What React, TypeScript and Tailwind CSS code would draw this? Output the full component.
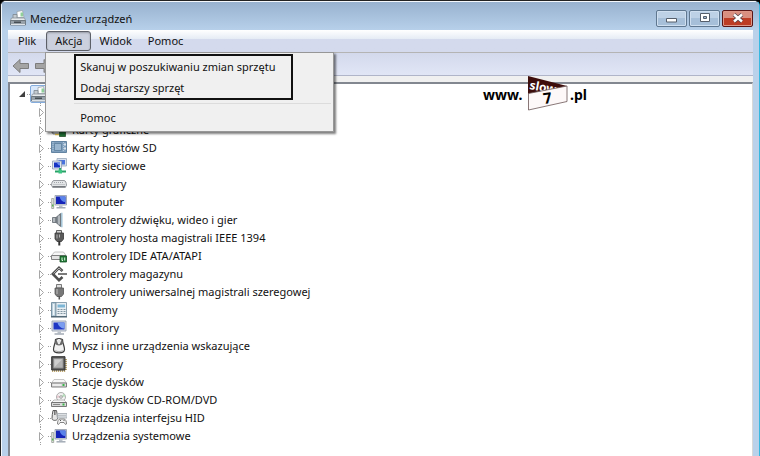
import type { ReactNode } from 'react';

function Icon({ children }: { children: ReactNode }) {
  return (
    <svg width="16" height="16" viewBox="0 0 16 16" className="block shrink-0" aria-hidden="true">
      {children}
    </svg>
  );
}

function PrinterIcon() {
  return (
    <Icon>
      <path d="M7 1.500 12.500.5l1.500 7H7z" fill="#fff" stroke="#9aa2a9" strokeWidth=".8" />
      <path d="M10.500 2.500h2.500v4h-2.500z" fill="#8fcf9a" />
      <path d="M3 4.500h4v4.500H3z" fill="#c3cad0" stroke="#7c868e" strokeWidth=".8" />
      <path d="M1.500 8h13l1 2.500H.5z" fill="#e6eaed" stroke="#8a939a" strokeWidth=".8" />
      <path d="M.5 10.500h15v4.500H.5z" fill="#98a2aa" stroke="#636d74" strokeWidth=".8" />
      <path d="M1 14.500h14" stroke="#dfe4e8" strokeWidth="1" />
      <path d="M4 11.500h7v1.500H4z" fill="#474f55" />
    </Icon>
  );
}

function AdapterIcon() {
  return (
    <Icon>
      <path d="M1 4h12v7H1z" fill="#b9bfc4" stroke="#777" strokeWidth=".8" />
      <path d="M2 8h7v4H2z" fill="#d8dcdf" stroke="#888" strokeWidth=".8" />
      <path d="M8.500 8.500h6v6h-6z" fill="#1e6c33" stroke="#27522b" strokeWidth=".8" />
      <path d="M4 12.500h4" stroke="#e0c050" strokeWidth="1.500" />
    </Icon>
  );
}

function SdIcon() {
  return (
    <Icon>
      <path d="M.5 1.500h15v11H.5z" fill="#7f9fbd" stroke="#6384a2" strokeWidth="1" />
      <path d="M3.500 3.500h7v7h-7z" fill="#9ab6cf" stroke="#5d7f9d" strokeWidth=".8" />
      <path d="M12.500 2v10M2 2v10" stroke="#b4c9dc" strokeWidth="1" strokeDasharray="1 1" />
      <path d="M13 3.500h2v2h-2zM13 7.500h2v2h-2z" fill="#d5e1ec" />
    </Icon>
  );
}

function NetworkIcon() {
  return (
    <Icon>
      <path d="M6 .5h9.500v7.500H6z" fill="#d9e2ee" stroke="#9aa8bb" strokeWidth=".8" />
      <path d="M7.500 2H14v4.500H7.500z" fill="#4a72dc" />
      <path d="M1.500 3h9v8h-9z" fill="#dfe6f0" stroke="#8e9db3" strokeWidth=".8" />
      <path d="M3 4.500h6v5H3z" fill="#1733c4" />
      <path d="M6 4.500h3v3c-1.500 0-3-1.500-3-3z" fill="#6c8fee" />
      <path d="M9 10v4M4 13.500h11" stroke="#26a266" strokeWidth="2" />
      <path d="M7.500 11.500H11v4H7.500z" fill="#3cc482" />
    </Icon>
  );
}

function KeyboardIcon() {
  return (
    <Icon>
      <path d="M3 4.500h10c1.500 0 2.500 2.500 2.500 4.500 0 1-.5 2-1.500 2H2C1 11 .5 10 .5 9 .5 7 1.500 4.500 3 4.500z" fill="#e4e6e8" stroke="#8d9197" strokeWidth=".9" />
      <path d="M3 6.500h10M2.500 8.500h11" stroke="#a3a7ac" strokeWidth="1" strokeDasharray="1 1" />
      <path d="M1.500 10.800h13" stroke="#5e6267" strokeWidth="1.200" />
    </Icon>
  );
}

function ComputerIcon() {
  return (
    <Icon>
      <path d="M.7 4.500h2v10h-2z" fill="#e2e5e0" stroke="#969c96" strokeWidth=".8" />
      <path d="M1 10.500h1.500v2H1z" fill="#57b352" />
      <path d="M4 1.500h11.500v9.500H4z" fill="#d5dae2" stroke="#9aa3b1" strokeWidth=".9" />
      <path d="M5 2.500h9.500v7.500H5z" fill="#1524b8" />
      <path d="M8.500 2.500h6v5.500c-2 .5-5-1.500-6-5.500z" fill="#5a83ea" />
      <path d="M8 11.500h3.500V13H8z" fill="#b9c0c9" />
      <path d="M5.500 13.800h9" stroke="#a3abb6" strokeWidth="1.500" />
    </Icon>
  );
}

function MonitorIcon() {
  return (
    <Icon>
      <path d="M1 1h14v10H1z" fill="#d9dee7" stroke="#9aa3b1" strokeWidth=".9" />
      <path d="M2.500 2.500h11v7h-11z" fill="#1f37c4" />
      <path d="M6.500 2.500h7v6c-3 0-6-2-7-6z" fill="#7a9df0" />
      <path d="M6.500 11.500h3.500v2H6.500z" fill="#b9c0c9" />
      <path d="M3.500 14h9.500" stroke="#a3abb6" strokeWidth="1.500" />
    </Icon>
  );
}

function SpeakerIcon() {
  return (
    <Icon>
      <path d="M1.500 5.500H5v5H1.500z" fill="#b3b9be" stroke="#6c7379" strokeWidth=".9" />
      <path d="M5 5.500 9.500 1.500v13L5 10.500z" fill="#828a91" stroke="#5d656b" strokeWidth=".8" />
      <path d="M8 3.500v9" stroke="#dfe3e6" strokeWidth="1" />
      <path d="M10.800.8v14.400" stroke="#9cbfd4" strokeWidth="1.400" />
    </Icon>
  );
}

function FirewireIcon() {
  return (
    <Icon>
      <path d="M5.500.5h5v3h-5z" fill="#d4d4d4" stroke="#555" strokeWidth=".9" />
      <path d="M4 3h8.500v6l-2 2.500H6L4 9z" fill="#5a5a5a" stroke="#3a3a3a" strokeWidth=".8" />
      <path d="M6 4.500v4M8.500 4.500v3" stroke="#b5b5b5" strokeWidth="1" />
      <path d="M7.300 11h2v4.500h-2z" fill="#333" />
    </Icon>
  );
}

function UsbIcon() {
  return (
    <Icon>
      <path d="M5.500.5h5V4h-5z" fill="#dedede" stroke="#6c6c6c" strokeWidth=".9" />
      <path d="M4 4h8.500v6l-2 2.500H6L4 10z" fill="#777" stroke="#555" strokeWidth=".8" />
      <path d="M6 5v5" stroke="#b5b5b5" strokeWidth="1.200" />
      <path d="M7.500 12h1.600v3.500H7.500z" fill="#555" />
    </Icon>
  );
}

function IdeIcon() {
  return (
    <Icon>
      <path d="M3.500 4h9L15 7.500H.5z" fill="#f7f7f7" stroke="#b5b5b5" strokeWidth=".8" />
      <path d="M.5 7.500H15v4H.5z" fill="#e4e4e4" stroke="#777" strokeWidth=".9" />
      <path d="M9 8h6.500v6H9z" fill="#1f7a35" stroke="#155225" strokeWidth=".8" />
      <path d="M11 9.500v3h1M13.700 9.500v3" stroke="#dff2df" strokeWidth="1" fill="none" />
    </Icon>
  );
}

function StorageIcon() {
  return (
    <Icon>
      <path d="M11.500 5 8 1.800 1.800 8 8 14.200l3.500-3.200" fill="none" stroke="#4e4e4e" strokeWidth="2.600" />
      <path d="M10.500 4.300 8 2 2.500 7.500" fill="none" stroke="#b0b0b0" strokeWidth="1" />
      <path d="M7 8h9" stroke="#7b7b7b" strokeWidth="2" />
    </Icon>
  );
}

function ModemIcon() {
  return (
    <Icon>
      <path d="M.5.5h4.500v14H.5z" fill="#b6cbd9" stroke="#6f8c9f" strokeWidth=".9" />
      <path d="M5 .5h10.500v14H5z" fill="#e9eff3" stroke="#8299a8" strokeWidth=".9" />
      <path d="M6.500 2.500H14v3H6.500z" fill="#7db6d6" />
      <path d="M6.500 7.500h8M6.500 9.500h8M6.500 11.500h8" stroke="#8296a3" strokeWidth="1" strokeDasharray="2 1" />
      <path d="M2.700 2v11" stroke="#eef5f9" strokeWidth="1.500" />
      <path d="M0 14.800h16" stroke="#4f6472" strokeWidth="1.400" />
    </Icon>
  );
}

function MouseIcon() {
  return (
    <Icon>
      <path d="M4.500 1.500c2-1 5-1 7 0 0 3.500 2 6.500 2 10 0 4.500-11 4.500-11 0 0-3.500 2-6.500 2-10z" fill="#f1f1f1" stroke="#3f3f3f" strokeWidth="1.200" />
      <path d="M4.800 1.500C6.500 2 6 5.500 8 6.500c2-1 1.500-4.500 3.200-5L12 5.500c-1.500 2.500-6.500 2.500-8 0z" fill="#6a6a6a" />
      <path d="M7 1h2v4.500H7z" fill="#e9e9e9" />
      <path d="M4.500 12.500c1 1.500 6 1.500 7 0" fill="none" stroke="#a8a8a8" strokeWidth="1" />
    </Icon>
  );
}

function ProcessorIcon() {
  return (
    <Icon>
      <path d="M1 15h13.500M15 3v11" stroke="#a98c45" strokeWidth="1.600" strokeDasharray="1.200 .8" />
      <path d="M.7.7h13.300v13.300H.7z" fill="#5a5a5a" stroke="#333" strokeWidth="1" />
      <path d="M2.500 2.500h9.500v9.500H2.500z" fill="#b3b3b3" stroke="#8c8c8c" strokeWidth=".8" />
      <path d="M3.500 3.500h7.500l-7.500 7.500z" fill="#cfcfcf" />
    </Icon>
  );
}

function DiskIcon() {
  return (
    <Icon>
      <path d="M3 5.500h10l2.500 3.500H.5z" fill="#f7f7f7" stroke="#bbb" strokeWidth=".8" />
      <path d="M.5 9h15v4H.5z" fill="#dedede" stroke="#727272" strokeWidth=".9" />
      <path d="M2 11h8" stroke="#fafafa" strokeWidth="1" />
      <path d="M11.500 10h2v2h-2z" fill="#3bb54a" />
    </Icon>
  );
}

function DvdIcon() {
  return (
    <Icon>
      <circle cx="10" cy="5" r="4.500" fill="#f3f3f3" stroke="#9a9a9a" strokeWidth=".8" />
      <path d="M10 5 13 1.500l1.500 3z" fill="#b4dcb9" />
      <path d="M10 5 6.500 3 6 6z" fill="#e5c4cc" />
      <circle cx="10" cy="5" r="1.300" fill="#fff" stroke="#888" strokeWidth=".8" />
      <path d="M3 8h10l2.500 2.500H.5z" fill="#f7f7f7" stroke="#aaa" strokeWidth=".8" />
      <path d="M.5 10.500h15v4H.5z" fill="#dadada" stroke="#6c6c6c" strokeWidth=".9" />
      <path d="M2 12.500h7" stroke="#888" strokeWidth="1" />
      <path d="M11.500 11.500h2v2h-2z" fill="#3bb54a" />
    </Icon>
  );
}

function HidIcon() {
  return (
    <Icon>
      <path d="M2 .5h3.500c.5 3 1 5 1 8 0 2.500-5.500 2.500-5.500 0 0-3 .5-5 1-8z" fill="#e6e6e6" stroke="#5a5a5a" strokeWidth="1" />
      <path d="M3 1h1.600v4H3z" fill="#777" />
      <path d="M6.500 3.500H16v4.500H6.500z" fill="#dde1e4" stroke="#a2a8ad" strokeWidth=".8" />
      <path d="M7.500 5.800H15" stroke="#848b91" strokeWidth="1" strokeDasharray="1 1" />
      <path d="M6.500 14c0-3 1-5 2.500-5h4c1.500 0 2.500 2 2.500 5l-1 .5-1.500-2h-4l-1.500 2z" fill="#f1f1f1" stroke="#777" strokeWidth=".9" />
      <path d="M9 10.500h1M12.500 10.500h1" stroke="#555" strokeWidth="1.200" />
    </Icon>
  );
}

type Device = { label: string; icon: ReactNode };

const devices: Device[] = [
  { label: '', icon: <ComputerIcon /> },
  { label: 'Karty graficzne', icon: <AdapterIcon /> },
  { label: 'Karty hostów SD', icon: <SdIcon /> },
  { label: 'Karty sieciowe', icon: <NetworkIcon /> },
  { label: 'Klawiatury', icon: <KeyboardIcon /> },
  { label: 'Komputer', icon: <ComputerIcon /> },
  { label: 'Kontrolery dźwięku, wideo i gier', icon: <SpeakerIcon /> },
  { label: 'Kontrolery hosta magistrali IEEE 1394', icon: <FirewireIcon /> },
  { label: 'Kontrolery IDE ATA/ATAPI', icon: <IdeIcon /> },
  { label: 'Kontrolery magazynu', icon: <StorageIcon /> },
  { label: 'Kontrolery uniwersalnej magistrali szeregowej', icon: <UsbIcon /> },
  { label: 'Modemy', icon: <ModemIcon /> },
  { label: 'Monitory', icon: <MonitorIcon /> },
  { label: 'Mysz i inne urządzenia wskazujące', icon: <MouseIcon /> },
  { label: 'Procesory', icon: <ProcessorIcon /> },
  { label: 'Stacje dysków', icon: <DiskIcon /> },
  { label: 'Stacje dysków CD-ROM/DVD', icon: <DvdIcon /> },
  { label: 'Urządzenia interfejsu HID', icon: <HidIcon /> },
  { label: 'Urządzenia systemowe', icon: <ComputerIcon /> },
];

function TitleBar() {
  return (
    <header className="flex h-7 items-center bg-linear-to-b from-[#98b2cf] to-[#b7d0ea] pl-2 pr-1.5">
      <div className="pt-1">
        <PrinterIcon />
      </div>
      <h1 className="ml-1 mt-1.5 flex-1">Menedżer urządzeń</h1>
      <div className="flex gap-0.5 pt-1">
        <button
          aria-label="Minimalizuj"
          className="flex h-[17px] w-[31px] items-center justify-center rounded-xs border border-[#5f7790] bg-linear-to-b from-[#bdd1e6] from-50% to-[#a6bfd9] to-50% shadow-[inset_0_0_0_1px_#cfdff0]"
        >
          <svg width="12" height="12" viewBox="0 0 12 12">
            <path d="M.5 6.500h10v3.500H.5z" fill="#fff" stroke="#555e6b" />
          </svg>
        </button>
        <button
          aria-label="Maksymalizuj"
          className="flex h-[17px] w-[31px] items-center justify-center rounded-xs border border-[#5f7790] bg-linear-to-b from-[#bdd1e6] from-50% to-[#a6bfd9] to-50% shadow-[inset_0_0_0_1px_#cfdff0]"
        >
          <svg width="12" height="12" viewBox="0 0 12 12">
            <path d="M1.500 1.500h9v8h-9z" fill="#fff" stroke="#555e6b" />
            <path d="M4.500 4.500h3v2h-3z" fill="#a3bcd6" stroke="#555e6b" />
          </svg>
        </button>
        <button
          aria-label="Zamknij"
          className="flex h-[17px] w-[31px] items-center justify-center rounded-xs border border-[#5b1515] bg-linear-to-b from-[#d98f80] from-50% to-[#bd3d25] to-50% shadow-[inset_0_0_0_1px_#dd9788]"
        >
          <svg width="12" height="12" viewBox="0 0 12 12">
            <path d="M2 2.500l8 7M10 2.500l-8 7" stroke="#55444a" strokeWidth="4" />
            <path d="M2 2.500l8 7M10 2.500l-8 7" stroke="#fff" strokeWidth="2.400" />
          </svg>
        </button>
      </div>
    </header>
  );
}

function ActionMenu() {
  return (
    <div className="absolute -left-px top-[21px] z-10 w-[289px] border border-[#979797] bg-[#f0f0f0] pb-[3px] pl-7 pr-0.5 pt-px shadow-[2px_2px_2px_rgba(0,0,0,0.5)]">
      <div className="mr-[38px] border-2 border-[#111]">
        <button className="block h-[21px] w-full pl-1 text-left">Skanuj w poszukiwaniu zmian sprzętu</button>
        <button className="block h-[21px] w-full pl-1 text-left">Dodaj starszy sprzęt</button>
      </div>
      <hr className="mb-[3px] mt-[3px] border-t border-[#dcdcdc]" />
      <button className="block h-[21px] w-full pl-1.5 text-left">Pomoc</button>
    </div>
  );
}

function MenuBar() {
  return (
    <nav className="flex h-[23px] items-center border-b border-[#b4b4b4] bg-linear-to-b from-white from-0% via-[#e6ecf5] via-40% to-[#d4daed] to-40% pl-0.5">
      <button className="pl-2 pr-2.5">Plik</button>
      <div className="relative">
        <button className="h-5 rounded-[3px] border border-[#5d6068] bg-[#cbd0dd] px-2 shadow-[inset_0_1px_2px_rgba(0,0,0,0.25)]">
          Akcja
        </button>
        <ActionMenu />
      </div>
      <button className="px-2">Widok</button>
      <button className="px-2">Pomoc</button>
    </nav>
  );
}

function ToolBar() {
  return (
    <div className="flex h-[23px] items-center gap-1 border-b border-[#b0b5c9] bg-linear-to-b from-[#d3d9ec] to-[#e1e6f6] pl-1">
      <button aria-label="Wstecz" className="pt-1">
        <svg width="18" height="16" viewBox="0 0 18 16">
          <path d="M1 8 8 1.500v4h8.500v5H8v4z" fill="#a4a4a4" stroke="#7d7d7d" />
        </svg>
      </button>
      <button aria-label="Dalej" className="pt-1">
        <svg width="18" height="16" viewBox="0 0 18 16">
          <path d="M17 8 10 1.500v4H1.500v5H10v4z" fill="#a4a4a4" stroke="#7d7d7d" />
        </svg>
      </button>
    </div>
  );
}

function Logo() {
  return (
    <div className="absolute left-[473px] -top-2 flex items-center text-[14px] font-bold leading-5 text-black">
      <span className="w-[45px] pt-0.5">www.</span>
      <svg width="40" height="35" viewBox="0 0 40 35" aria-label="slow7" className="overflow-visible">
        <path d="M0 0 39 10v3L0 18z" fill="#3d0d0b" />
        <text x="1" y="13" fontSize="12" fill="#fff" transform="rotate(10 1 13)">
          slow
        </text>
        <path d="M.5 17.500 39 10v15.500L.5 34z" fill="#fdf8f8" stroke="#6b5555" strokeWidth=".8" />
        <text x="16" y="28" fontSize="15" fill="#000" transform="rotate(-8 16 28)">
          7
        </text>
      </svg>
      <span className="ml-0.5 pt-0.5">.pl</span>
    </div>
  );
}

function DeviceRow({ label, icon }: Device) {
  return (
    <li className="flex h-[18px] items-center">
      <svg width="12" height="18" viewBox="0 0 12 18" className="shrink-0" aria-hidden="true">
        <path d="M1.500 0v3M1.500 15v3M9 9.500h3" stroke="#a0a0a0" strokeDasharray="1 1" />
        <path d="M.5 5.500v8l4-4z" fill="#fff" stroke="#a6a6a6" />
      </svg>
      {icon}
      <span className="ml-[5px] whitespace-nowrap">{label}</span>
    </li>
  );
}

function DeviceTree() {
  return (
    <main className="relative flex-1 border-2 border-b-0 border-r border-[#828790] border-r-[#d8d8d8] bg-white pt-px">
      <div className="flex h-[18px] items-center pl-2">
        <svg width="12" height="12" viewBox="0 0 12 12" aria-hidden="true">
          <path d="M7 3v6H1z" fill="#404040" />
          <path d="M9 6.500h3" stroke="#a0a0a0" strokeDasharray="1 1" />
        </svg>
        <span className="rounded-xs border border-[#84acdd] bg-[#d9e8fa]">
          <PrinterIcon />
        </span>
      </div>
      <ul className="pl-[29px]">
        {devices.map((device, i) => (
          <DeviceRow key={i} {...device} />
        ))}
      </ul>
      <Logo />
    </main>
  );
}

export default function App() {
  return (
    <div className="bg-black font-['Noto_Sans','Open_Sans',sans-serif] text-[11px] leading-4 text-[#111]">
      <div className="flex min-h-screen flex-col overflow-hidden rounded-t-md border-l border-r border-t border-[#222] border-r-[#37b8e0] bg-[#b9d1ea]">
        <div className="flex flex-1 flex-col border-l border-t border-[#f4f8fc]">
          <TitleBar />
          <div className="ml-1.5 mr-1.5 flex flex-1 flex-col bg-[#f0f0f0]">
            <MenuBar />
            <ToolBar />
            <div className="mt-1.5 flex flex-1 flex-col">
              <DeviceTree />
            </div>
          </div>
        </div>
      </div>
    </div>
  );
}
